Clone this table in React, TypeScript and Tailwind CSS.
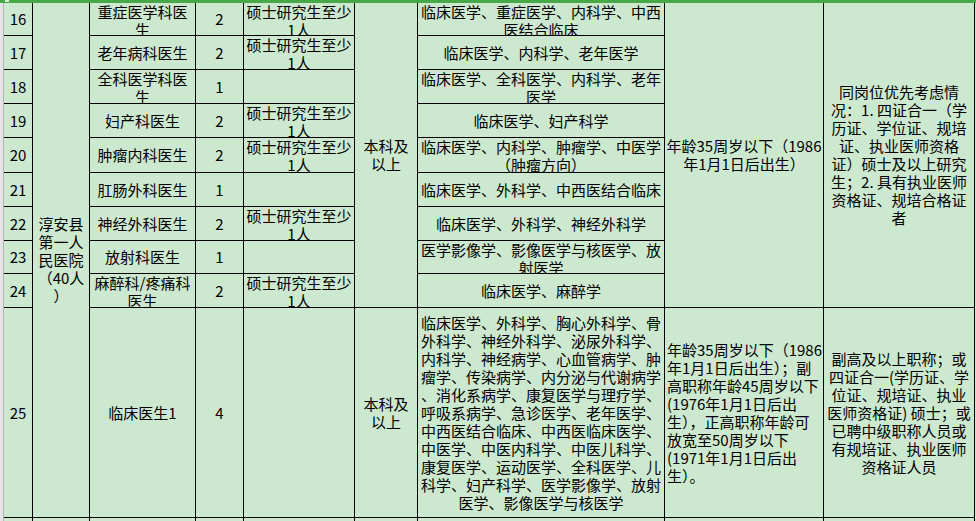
import React from "react";

type CellProps = {
  lines?: string[];
  top?: boolean;
  left?: boolean;
  span?: string;
};

function Cell({ lines = [], top = false, left = false, span = "" }: CellProps) {
  const v = top ? "justify-start" : "justify-center";
  const h = left ? "items-start pl-[2px]" : "items-center";
  return (
    <div className={`bg-[#cce8cf] overflow-hidden flex flex-col ${v} ${h} ${span}`}>
      {lines.map((l, i) => (
        <div key={i} className="whitespace-nowrap leading-[18px]">
          {l}
        </div>
      ))}
    </div>
  );
}

const master = ["硕士研究生至少", "1人"];

export default function App() {
  return (
    <div
      className="w-[976px] h-[521px] overflow-hidden bg-[#cce8cf] flex flex-col text-[15px] text-black"
      style={{ fontFamily: '"Noto Sans CJK SC", "Noto Sans", sans-serif' }}
    >
      <div className="h-[3px] bg-[#47a847] shrink-0 flex">
        <div className="w-[5px]" />
        <div className="w-[4px] h-[2px] bg-[#d8eed8]" />
      </div>
      <div className="flex flex-1 min-h-0">
        <div className="w-[4px] shrink-0 bg-[#e3e3e3] border-r border-[#b4b4b4]" />
        <div className="shrink-0 border-r border-black bg-black grid gap-px grid-cols-[28px_56px_105px_47px_110px_62px_246px_158px_150px] grid-rows-[32px_33px_33px_33px_34px_33px_33px_32px_33px_209px_20px] content-start">
          {/* row 16 */}
          <Cell lines={["16"]} />
          <Cell
            span="row-span-10"
            lines={["淳安县", "第一人", "民医院", "（40人", "）"]}
          />
          <Cell top lines={["重症医学科医", "生"]} />
          <Cell lines={["2"]} />
          <Cell top lines={master} />
          <Cell span="row-span-9" lines={["本科及", "以上"]} />
          <Cell top lines={["临床医学、重症医学、内科学、中西", "医结合临床"]} />
          <Cell span="row-span-9" lines={["年龄35周岁以下（1986", "年1月1日后出生）"]} />
          <Cell
            span="row-span-9"
            lines={[
              "同岗位优先考虑情",
              "况：1. 四证合一（学",
              "历证、学位证、规培",
              "证、执业医师资格",
              "证）硕士及以上研究",
              "生；2. 具有执业医师",
              "资格证、规培合格证",
              "者",
            ]}
          />

          {/* row 17 */}
          <Cell lines={["17"]} />
          <Cell lines={["老年病科医生"]} />
          <Cell lines={["2"]} />
          <Cell top lines={master} />
          <Cell lines={["临床医学、内科学、老年医学"]} />

          {/* row 18 */}
          <Cell lines={["18"]} />
          <Cell top lines={["全科医学科医", "生"]} />
          <Cell lines={["1"]} />
          <Cell />
          <Cell top lines={["临床医学、全科医学、内科学、老年", "医学"]} />

          {/* row 19 */}
          <Cell lines={["19"]} />
          <Cell lines={["妇产科医生"]} />
          <Cell lines={["2"]} />
          <Cell top lines={master} />
          <Cell lines={["临床医学、妇产科学"]} />

          {/* row 20 */}
          <Cell lines={["20"]} />
          <Cell lines={["肿瘤内科医生"]} />
          <Cell lines={["2"]} />
          <Cell top lines={master} />
          <Cell top lines={["临床医学、内科学、肿瘤学、中医学", "（肿瘤方向）"]} />

          {/* row 21 */}
          <Cell lines={["21"]} />
          <Cell lines={["肛肠外科医生"]} />
          <Cell lines={["1"]} />
          <Cell />
          <Cell lines={["临床医学、外科学、中西医结合临床"]} />

          {/* row 22 */}
          <Cell lines={["22"]} />
          <Cell lines={["神经外科医生"]} />
          <Cell lines={["2"]} />
          <Cell top lines={master} />
          <Cell lines={["临床医学、外科学、神经外科学"]} />

          {/* row 23 */}
          <Cell lines={["23"]} />
          <Cell lines={["放射科医生"]} />
          <Cell lines={["1"]} />
          <Cell />
          <Cell top lines={["医学影像学、影像医学与核医学、放", "射医学"]} />

          {/* row 24 */}
          <Cell lines={["24"]} />
          <Cell top lines={["麻醉科/疼痛科", "医生"]} />
          <Cell lines={["2"]} />
          <Cell top lines={master} />
          <Cell lines={["临床医学、麻醉学"]} />

          {/* row 25 */}
          <Cell lines={["25"]} />
          <Cell lines={["临床医生1"]} />
          <Cell lines={["4"]} />
          <Cell />
          <Cell lines={["本科及", "以上"]} />
          <Cell
            lines={[
              "临床医学、外科学、胸心外科学、骨",
              "外科学、神经外科学、泌尿外科学、",
              "内科学、神经病学、心血管病学、肿",
              "瘤学、传染病学、内分泌与代谢病学",
              "、消化系病学、康复医学与理疗学、",
              "呼吸系病学、急诊医学、老年医学、",
              "中西医结合临床、中西医临床医学、",
              "中医学、中医内科学、中医儿科学、",
              "康复医学、运动医学、全科医学、儿",
              "科学、妇产科学、医学影像学、放射",
              "医学、影像医学与核医学",
            ]}
          />
          <Cell
            left
            lines={[
              "年龄35周岁以下（1986",
              "年1月1日后出生）；副",
              "高职称年龄45周岁以下",
              "(1976年1月1日后出",
              "生），正高职称年龄可",
              "放宽至50周岁以下",
              "(1971年1月1日后出",
              "生）。",
            ]}
          />
          <Cell
            lines={[
              "副高及以上职称；或",
              "四证合一(学历证、学",
              "位证、规培证、执业",
              "医师资格证) 硕士；或",
              "已聘中级职称人员或",
              "有规培证、执业医师",
              "资格证人员",
            ]}
          />

          {/* row 26 (cut off) */}
          <Cell />
          <Cell />
          <Cell />
          <Cell />
          <Cell />
          <Cell />
          <Cell />
          <Cell />
          <Cell />
        </div>
      </div>
    </div>
  );
}
